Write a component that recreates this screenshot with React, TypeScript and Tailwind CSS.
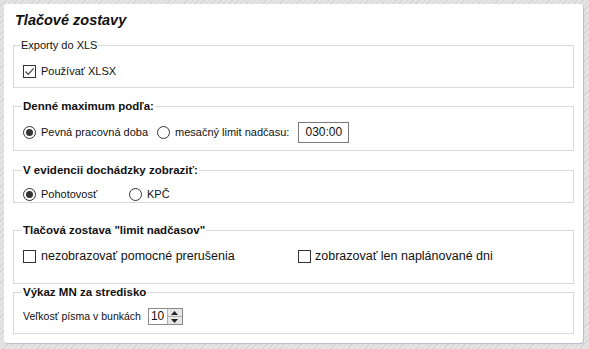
import type { ReactNode } from 'react';

const font = { fontFamily: '"Liberation Sans", Arial, sans-serif' };

function Group({
  title,
  bold = true,
  className,
  children,
}: {
  title: string;
  bold?: boolean;
  className: string;
  children: ReactNode;
}) {
  return (
    <div className={`relative border border-[#d9d9d9] pl-[9px] ${className}`}>
      <span
        className={`absolute -top-[8px] bg-white px-[1px] leading-[14px] text-[#111] ${
          bold ? 'left-[8px] text-[11.5px] font-bold' : 'left-[6px] text-[11px]'
        }`}
      >
        {title}
      </span>
      {children}
    </div>
  );
}

function Checkbox({ checked = false }: { checked?: boolean }) {
  return (
    <span className="flex h-[13px] w-[13px] shrink-0 items-center justify-center border border-[#333] bg-white">
      {checked && (
        <svg width="11" height="11" viewBox="0 0 11 11" fill="none">
          <path d="M1.5 5.5 L4.3 8.3 L9.6 2.4" stroke="#444" strokeWidth="1.2" />
        </svg>
      )}
    </span>
  );
}

function Radio({ checked = false }: { checked?: boolean }) {
  return (
    <span className="flex h-[13px] w-[13px] shrink-0 items-center justify-center rounded-full border border-[#333] bg-white">
      {checked && <span className="h-[7px] w-[7px] rounded-full bg-[#333]" />}
    </span>
  );
}

export default function App() {
  return (
    <div
      style={font}
      className="h-[349px] w-[589px] overflow-hidden bg-[repeating-linear-gradient(135deg,#d6d6d6_0px,#d6d6d6_1px,#e4e4e4_1px,#e4e4e4_4px)] pl-[4px] pt-[4px]"
    >
      <div className="h-[339px] w-[579px] rounded-[3px] bg-white px-[9px] pt-[8px] shadow-[1px_1px_1px_#b4bcc8] text-[11px] text-[#111]">
        <div className="pl-[2px] text-[14.5px] font-bold italic leading-[17px] text-[#111]">Tlačové zostavy</div>

        <Group title="Exporty do XLS" bold={false} className="mt-[16px] h-[43px] pt-[19px]">
          <div className="flex items-center gap-[5px] leading-[13px]">
            <Checkbox checked />
            <span>Používať XLSX</span>
          </div>
        </Group>

        <Group title="Denné maximum podľa:" className="mt-[18px] h-[45px] pt-[15px]">
          <div className="flex h-[21px] items-center leading-[13px]">
            <div className="flex w-[134px] items-center gap-[5px]">
              <Radio checked />
              <span>Pevná pracovná doba</span>
            </div>
            <div className="flex items-center gap-[5px]">
              <Radio />
              <span>mesačný limit nadčasu:</span>
            </div>
            <div className="ml-[9px] flex h-[21px] w-[51px] items-center justify-center border border-[#7a7a7a] text-[12px]">
              030:00
            </div>
          </div>
        </Group>

        <Group title="V evidencii dochádzky zobraziť:" className="mt-[19px] h-[33px] pt-[17px]">
          <div className="flex items-center leading-[13px]">
            <div className="flex w-[106px] items-center gap-[5px]">
              <Radio checked />
              <span>Pohotovosť</span>
            </div>
            <div className="flex items-center gap-[5px]">
              <Radio />
              <span>KPČ</span>
            </div>
          </div>
        </Group>

        <Group title={'Tlačová zostava "limit nadčasov"'} className="mt-[27px] h-[54px] pt-[19px]">
          <div className="flex items-center text-[12.5px] leading-[13px]">
            <div className="flex w-[275px] items-center gap-[5px]">
              <Checkbox />
              <span>nezobrazovať pomocné prerušenia</span>
            </div>
            <div className="flex items-center gap-[4px]">
              <Checkbox />
              <span>zobrazovať len naplánované dni</span>
            </div>
          </div>
        </Group>

        <Group title="Výkaz MN za stredisko" className="mt-[8px] h-[42px] pt-[15px]">
          <div className="flex h-[17px] items-center leading-[13px]">
            <span className="text-[10.5px]">Veľkosť písma v bunkách</span>
            <div className="ml-[7px] flex h-[17px] w-[35px] border border-[#8a8a8a]">
              <span className="flex flex-1 items-center pl-[2px] text-[12px]">10</span>
              <div className="flex w-[15px] flex-col border-l border-[#b0b0b0] bg-[#e6e6e6]">
                <span className="flex flex-1 items-center justify-center border-b border-[#b0b0b0]">
                  <svg width="7" height="4" viewBox="0 0 7 4">
                    <path d="M0 4 L3.5 0 L7 4 Z" fill="#222" />
                  </svg>
                </span>
                <span className="flex flex-1 items-center justify-center">
                  <svg width="7" height="4" viewBox="0 0 7 4">
                    <path d="M0 0 L7 0 L3.5 4 Z" fill="#222" />
                  </svg>
                </span>
              </div>
            </div>
          </div>
        </Group>
      </div>
    </div>
  );
}
